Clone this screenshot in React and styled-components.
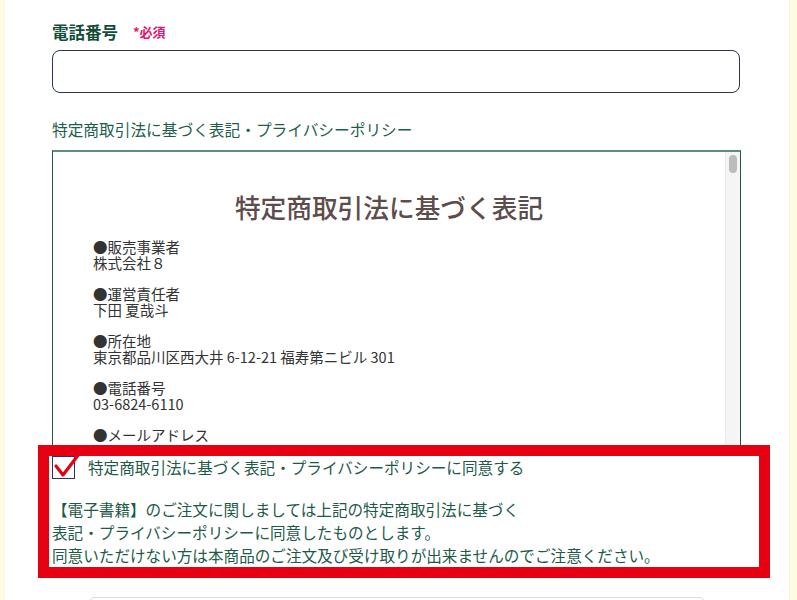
import React from "react";
import styled, { createGlobalStyle } from "styled-components";

const Global = createGlobalStyle`
  html, body { margin: 0; padding: 0; }
  body {
    background: #fdfbe4;
    font-family: "Noto Sans CJK JP", "Noto Sans", sans-serif;
  }
`;

const Page = styled.div`
  margin: 0 8px 0 5px;
  background: #ffffff;
  padding: 20px 0 0 47px;
  box-sizing: border-box;
  overflow: hidden;
  height: 600px;
  box-shadow: 1px 0 0 #f6f3da;
`;

const Form = styled.div`
  width: 688px;
  display: flex;
  flex-direction: column;
`;

const FieldLabel = styled.div`
  display: flex;
  align-items: center;
  height: 24px;
  line-height: 24px;
`;

const LabelText = styled.span`
  font-size: 16.5px;
  font-weight: 700;
  color: #124c3b;
`;

const Required = styled.span`
  margin-left: 15px;
  font-size: 13px;
  font-weight: 700;
  color: #e3156b;
`;

const TextInput = styled.input`
  margin-top: 6px;
  height: 43px;
  box-sizing: border-box;
  border: 1px solid #2b3358;
  border-radius: 8px;
  background: #fff;
  outline: none;
  padding: 0 12px;
  font-size: 15px;
`;

const SectionLabel = styled.div`
  margin-top: 26px;
  font-size: 15.7px;
  line-height: 22px;
  color: #1c5e4b;
`;

const ScrollBox = styled.div`
  position: relative;
  margin-top: 9px;
  width: 689px;
  height: 305px;
  box-sizing: border-box;
  border-top: 2px solid #5e8c82;
  border-left: 1px solid #1f5647;
  border-right: 1px solid #1f5647;
  overflow: hidden;
  background: #fff;
`;

const ScrollTrack = styled.div`
  position: absolute;
  top: 0;
  right: 0;
  bottom: 0;
  width: 14px;
  background: #f5f5f5;
  border-left: 1px solid #ececec;
`;

const ScrollThumb = styled.div`
  margin: 3px 0 0 3px;
  width: 8px;
  height: 18px;
  border-radius: 4px;
  background: #bcbcbc;
`;

const Doc = styled.div`
  padding: 39px 0 0 40px;
  width: 672px;
  box-sizing: border-box;
`;

const DocTitle = styled.h1`
  margin: 0 0 16px -40px;
  text-align: center;
  font-size: 25.7px;
  line-height: 32px;
  font-weight: 500;
  color: #5c4c4b;
`;

const DocItem = styled.div`
  font-size: 14.5px;
  line-height: 15.7px;
  color: #333;
  margin-bottom: 15.7px;
  white-space: nowrap;
`;

const Agreement = styled.div`
  position: relative;
  z-index: 1;
  margin: -10px 0 0 -14px;
  width: 732px;
  box-sizing: border-box;
  border: 11px solid #e60012;
  background: #fff;
  padding: 0 0 0 3px;
`;

const CheckRow = styled.label`
  display: flex;
  align-items: center;
  height: 23px;
`;

const CheckBox = styled.span`
  position: relative;
  width: 23px;
  height: 23px;
  box-sizing: border-box;
  border: 1px solid #2b3358;
  flex: none;
`;

const CheckMark = styled.svg`
  position: absolute;
  left: -1px;
  top: -9px;
  overflow: visible;
`;

const CheckLabel = styled.span`
  margin-left: 13px;
  font-size: 15.6px;
  line-height: 23px;
  color: #1d5a48;
`;

const Notice = styled.p`
  margin: 19px 0 0;
  font-size: 15.6px;
  line-height: 23px;
  color: #1d5a48;
  white-space: nowrap;
`;

const NextBox = styled.div`
  margin: 19px 0 0 38px;
  width: 612px;
  height: 30px;
  border: 1px solid #dcdcdc;
  border-radius: 4px;
`;

const items = [
  ["●販売事業者", "株式会社８"],
  ["●運営責任者", "下田 夏哉斗"],
  ["●所在地", "東京都品川区西大井 6-12-21 福寿第ニビル 301"],
  ["●電話番号", "03-6824-6110"],
  ["●メールアドレス", "info@8-inc.jp"],
  ["●販売価格", "各商品ページに記載"],
];

export default function App() {
  return (
    <>
      <Global />
      <Page>
        <Form>
          <FieldLabel>
            <LabelText>電話番号</LabelText>
            <Required>*必須</Required>
          </FieldLabel>
          <TextInput type="tel" />
          <SectionLabel>特定商取引法に基づく表記・プライバシーポリシー</SectionLabel>
          <ScrollBox>
            <Doc>
              <DocTitle>特定商取引法に基づく表記</DocTitle>
              {items.map(([h, v]) => (
                <DocItem key={h}>
                  {h}
                  <br />
                  {v}
                </DocItem>
              ))}
            </Doc>
            <ScrollTrack>
              <ScrollThumb />
            </ScrollTrack>
          </ScrollBox>
          <Agreement>
            <CheckRow>
              <CheckBox>
                <CheckMark width="30" height="30" viewBox="0 0 30 30">
                  <polyline
                    points="4,18 11,27 27,6"
                    fill="none"
                    stroke="#e60012"
                    strokeWidth="3.2"
                    strokeLinecap="round"
                    strokeLinejoin="round"
                  />
                </CheckMark>
              </CheckBox>
              <CheckLabel>特定商取引法に基づく表記・プライバシーポリシーに同意する</CheckLabel>
            </CheckRow>
            <Notice>
              【電子書籍】のご注文に関しましては上記の特定商取引法に基づく
              <br />
              表記・プライバシーポリシーに同意したものとします。
              <br />
              同意いただけない方は本商品のご注文及び受け取りが出来ませんのでご注意ください。
            </Notice>
          </Agreement>
          <NextBox />
        </Form>
      </Page>
    </>
  );
}
